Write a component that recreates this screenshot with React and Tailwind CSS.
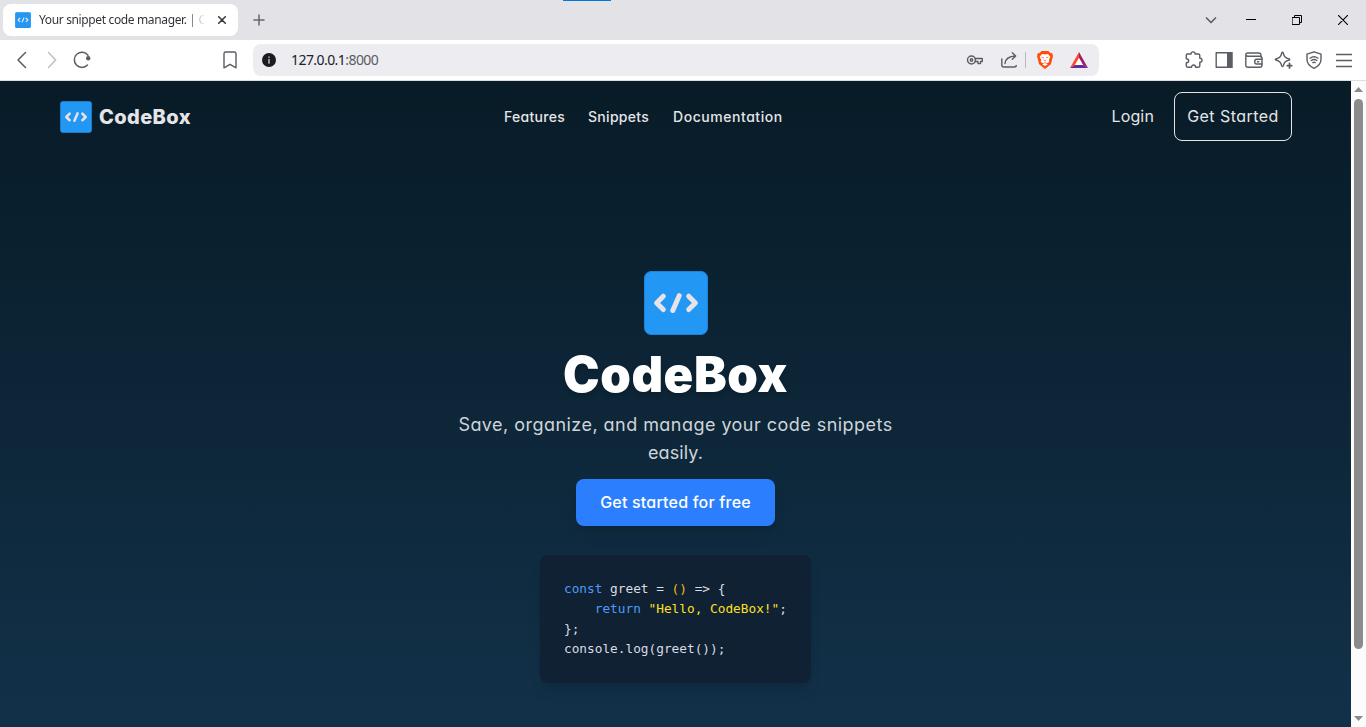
import React from "react";

const S = ({ w = 20, h = w, className = "", children, vb }) => (
  <svg
    width={w}
    height={h}
    viewBox={vb || `0 0 ${w} ${h}`}
    fill="none"
    stroke="currentColor"
    strokeWidth="1.4"
    strokeLinecap="round"
    strokeLinejoin="round"
    className={"shrink-0 " + className}
  >
    {children}
  </svg>
);

function Logo({ size }) {
  return (
    <S w={size} vb="0 0 64 64">
      <rect x="0.5" y="0.5" width="63" height="63" rx="6.5" fill="#2397f4" stroke="#1c83da" strokeWidth="1" />
      <g stroke="#e6e4e8" strokeWidth="5">
        <path d="M19.3 25.2L12.6 32L19.3 38.5" />
        <path d="M35.2 24.7L28.8 39.5" />
        <path d="M44.7 25.2L51.4 32L44.7 38.5" />
      </g>
    </S>
  );
}

function TabStrip() {
  return (
    <div className="flex h-10 items-center bg-[#e3e2e7]">
      <div className="ml-[3px] flex h-8 w-[235px] items-center rounded-lg bg-white pl-3">
        <Logo size={16} />
        <span className="ml-2 w-[166px] whitespace-nowrap bg-gradient-to-r from-[#2f3036] from-88% to-white bg-clip-text font-['Noto_Sans','Open_Sans',sans-serif] text-[12px] tracking-[-0.36px] text-transparent">
          Your snippet code manager. | C
        </span>
        <S w={10} className="ml-3 text-[#3b3c42]">
          <path d="M1.7 1.7L8.3 8.3M8.3 1.7L1.7 8.3" strokeWidth="1.6" />
        </S>
      </div>
      <S w={12} className="ml-[15px] text-[#66676c]">
        <path d="M6 1V11M1 6H11" strokeWidth="1.5" />
      </S>
      <div className="ml-[298px] h-px w-12 self-start bg-[#0078d7]" />
      <div className="ml-auto flex items-center text-black">
        <S w={12} className="mr-[29px] text-[#606166]">
          <path d="M1.5 4L6 8.5L10.500 4" strokeWidth="1.7" />
        </S>
        <S w={10} className="mr-[36px]">
          <path d="M0 4.500H10" strokeWidth="1" strokeLinecap="butt" />
        </S>
        <S w={10} className="mr-[36px]">
          <path d="M0.500 2.500H7.500V9.500H0.500ZM2.500 2.500V0.500H9.500V7.500H7.500" strokeWidth="1" strokeLinejoin="miter" />
        </S>
        <S w={10} className="mr-[18px]">
          <path d="M0 0L10 10M10 0L0 10" strokeWidth="1.1" />
        </S>
      </div>
    </div>
  );
}

function Toolbar() {
  return (
    <div className="flex h-[41px] items-center border-b border-[#dddde2] bg-white text-[#5b5d65]">
      <S w={20} className="ml-3">
        <path d="M13.500 2.500L6 10L13.500 17.500" strokeWidth="1.5" />
      </S>
      <S w={20} className="ml-[10px] text-[#bfc0c4]">
        <path d="M6.500 2.500L13.700 10L6.500 17.500" strokeWidth="1.5" />
      </S>
      <S w={20} className="ml-[10px]">
        <path d="M16 5.200A7.600 7.600 0 1 0 15.500 15" strokeWidth="1.500" />
        <circle cx="16.200" cy="8.200" r="2.200" fill="currentColor" stroke="none" />
      </S>
      <S w={20} className="ml-[128px]">
        <path d="M5.700 2H14.300Q16 2 16 3.700V17.800L10 14.300L4 17.800V3.700Q4 2 5.700 2Z" />
      </S>
      <div className="ml-[13px] flex h-8 w-[846px] items-center rounded-lg bg-[#edecf1]">
        <S w={14} className="ml-[9px]">
          <circle cx="7" cy="7" r="7" fill="#1b1b20" stroke="none" />
          <path d="M7 6.400V10.200M7 4V4.300" stroke="#d5d5da" strokeWidth="1.300" />
        </S>
        <span className="ml-[15px] pb-[2px] font-['Noto_Sans','Open_Sans',sans-serif] text-[14px] tracking-[-0.56px] text-[#202127]">
          127.0.0.1<span className="text-[#5a5b64]">:8000</span>
        </span>
        <div className="ml-auto flex items-center">
          <S w={18}>
            <circle cx="5.500" cy="9" r="4" />
            <circle cx="5.500" cy="9" r="1.200" />
            <path d="M9 7.500H16.300V10.500H14.500V12.600H12V10.500H9" />
          </S>
          <S w={18} className="ml-4">
            <path d="M1.800 8V14Q1.800 16 3.800 16H14.200Q16.200 16 16.200 14.500" />
            <path d="M5 12.500Q5.500 5.500 15.500 5M12.300 1.800L15.700 5L12.300 8.200" />
          </S>
          <div className="ml-[7px] h-4 w-px bg-[#b9bac0]" />
          <S w={16} h={18} className="ml-[11px]">
            <path d="M4.500 0H11.500L13.300 2L15.200 2.300L16 5L15.500 7L13.900 13.300L8 18L2.100 13.300L0.500 7L0 5L0.800 2.300L2.700 2Z" fill="#fc4f0c" stroke="none" />
            <path d="M5 3L8 3.600L11 3L13.300 5.800L11.900 9L12.200 11L9.600 12.400L10.600 13.400L8 15L5.400 13.400L6.400 12.400L3.800 11L4.100 9L2.700 5.800Z" fill="#fff" stroke="none" />
            <path d="M4.900 6.300L6.600 6.700M11.100 6.300L9.400 6.700M6.900 9.200L8 10L9.100 9.200M6.500 12.300L8 11.600L9.500 12.300" stroke="#fc4f0c" strokeWidth="0.700" />
          </S>
          <S w={18} h={16} className="mr-[11px] ml-[17px]">
            <path d="M9 0L0 16L5 13L9 6Z" fill="#ff4724" stroke="none" />
            <path d="M9 0L18 16L13 13L9 6Z" fill="#9e1f63" stroke="none" />
            <path d="M0 16H18L13 13H5Z" fill="#662d91" stroke="none" />
            <path d="M9 6L13 13H5Z" fill="#fff" stroke="none" />
          </S>
        </div>
      </div>
      <div className="ml-auto flex items-center gap-[10px] pr-3">
        <S>
          <path d="M3.500 4H7.100C6.300 1.200 11.800 1.200 11 4H14.300Q15.800 4 15.800 5.500V8.300C18.800 7.500 18.800 13 15.800 12.200V15.700Q15.800 17.300 14.300 17.300H11.600C11.600 14.300 7.600 14.300 7.600 17.300H4Q2.300 17.300 2.300 15.700V12.700C5.500 12.700 5.500 8.700 2.300 8.700V5.300Q2.300 4 3.500 4Z" />
        </S>
        <S>
          <path d="M2.200 2.700H17.800V17.300H2.200Z" />
          <path d="M13 2H18.500V18H13Z" fill="currentColor" stroke="none" />
        </S>
        <S>
          <path d="M17 6.500V5.500Q17 3 14.500 3H4Q1.800 3 1.800 5V15Q1.800 17.300 4 17.300H15.700Q18 17.300 18 15V8.500Q18 6.300 15.700 6.300H4Q1.800 6.300 1.800 4.800" />
          <path d="M18 9.300H12.600Q10.700 9.300 10.700 11.700Q10.700 14 12.600 14H18M13.500 11.700H14.800" />
        </S>
        <S>
          <path d="M8.500 2.300Q9 2.300 9.200 3C10.200 6.800 11.300 7.900 15.300 9Q16.300 9.500 15.300 10C11.300 11.100 10.200 12.200 9.200 16Q8.500 17.300 7.800 16C6.800 12.200 5.700 11.100 1.800 10Q0.800 9.500 1.800 9C5.700 7.900 6.800 6.800 7.800 3Q8 2.300 8.500 2.300Z" />
          <path d="M15.500 13.500V17.900M13.300 15.700H17.700" strokeWidth="1.800" />
        </S>
        <S>
          <path d="M10 1.800L17 4.200V9.500Q17 15 10 18.300Q3 15 3 9.500V4.200Z" />
          <path d="M6 8.200Q10 5.300 14 8.200M7.200 10.500Q10 8.500 12.800 10.500M8.800 12.600Q10 11.900 11.200 12.600" strokeWidth="1.300" />
        </S>
        <S>
          <path d="M2 4.500H18M2 10.500H18M2 16.500H18" strokeLinecap="butt" strokeWidth="1.500" />
        </S>
      </div>
    </div>
  );
}

function NavBar() {
  return (
    <header className="flex h-[72px] items-center text-[#e5e5e8]">
      <div className="ml-[60px] flex w-[444px] items-center">
        <Logo size={32} />
        <span className="ml-[7px] text-[20px] font-extrabold tracking-[0.4px] whitespace-nowrap">CodeBox</span>
      </div>
      <nav className="flex pb-[2px] text-[14px] font-medium whitespace-nowrap">
        <a className="w-[84px] tracking-[0.3px]">Features</a>
        <a className="w-[85px] tracking-[0.3px]">Snippets</a>
        <a className="tracking-[0.55px]">Documentation</a>
      </nav>
      <div className="mr-[59px] ml-auto flex items-center pb-px text-[16px] whitespace-nowrap">
        <a className="mr-5 pb-px tracking-[0.15px]">Login</a>
        <a className="flex h-[49px] w-[118px] items-center justify-center rounded-lg border border-[#e5e5e8] pb-px tracking-[0.45px]">
          Get Started
        </a>
      </div>
    </header>
  );
}

function CodeCard() {
  return (
    <div className="mt-[29px] h-32 w-[271px] rounded-lg bg-[#102134] p-6 font-['DejaVu_Sans_Mono',monospace] text-[12.770px] leading-5 whitespace-pre text-[#d9dce1] shadow-lg">
      <div className="flex">
        <span className="text-[#4f9bf8]">const</span>
        <span>{" greet = "}</span>
        <span className="text-[#f0b90b]">()</span>
        <span>{" => {"}</span>
      </div>
      <div className="flex">
        <span className="text-[#4f9bf8]">{"    return "}</span>
        <span className="text-[#fde020]">"Hello, CodeBox!"</span>
        <span>;</span>
      </div>
      <div>{"};"}</div>
      <div>console.log(greet());</div>
    </div>
  );
}

function Hero() {
  return (
    <main className="flex flex-col items-center pt-[118px]">
      <Logo size={64} />
      <h1 className="mt-4 text-[49px] leading-[48px] font-black tracking-[0.6px] text-white [text-shadow:0_3px_5px_rgba(0,0,0,0.18)]">
        CodeBox
      </h1>
      <p className="mt-3 w-[448px] text-center text-[18px] leading-7 tracking-[0.46px] whitespace-nowrap text-[#cfd4db]">
        Save, organize, and manage your code snippets
        <br />
        <span className="tracking-[0.1px]">easily.</span>
      </p>
      <button className="mt-3 h-[47px] w-[199px] rounded-lg bg-[#2b7fff] pb-px text-[16px] font-medium tracking-[0.2px] whitespace-nowrap text-white shadow-lg">
        Get started for free
      </button>
      <CodeCard />
    </main>
  );
}

function ScrollBar() {
  return (
    <div className="flex w-[15px] flex-col items-center bg-[#fcfcfc] text-[#8b8b8b]">
      <S w={9} h={5} className="mt-[6px]">
        <path d="M4.500 0L9 5H0Z" fill="currentColor" stroke="none" />
      </S>
      <div className="mt-[7px] h-[550px] w-[9px] rounded-full bg-[#8b8b8b]" />
      <S w={9} h={5} className="mt-auto mb-[6px]">
        <path d="M4.500 5L0 0H9Z" fill="currentColor" stroke="none" />
      </S>
    </div>
  );
}

export default function App() {
  return (
    <div className="flex h-[727px] w-[1366px] flex-col overflow-hidden">
      <TabStrip />
      <Toolbar />
      <div className="flex h-[646px]">
        <div className="w-[1351px] bg-gradient-to-b from-[#081b27] to-[#123149] font-['Inter',sans-serif] [font-feature-settings:'cv11']">
          <NavBar />
          <Hero />
        </div>
        <ScrollBar />
      </div>
    </div>
  );
}
